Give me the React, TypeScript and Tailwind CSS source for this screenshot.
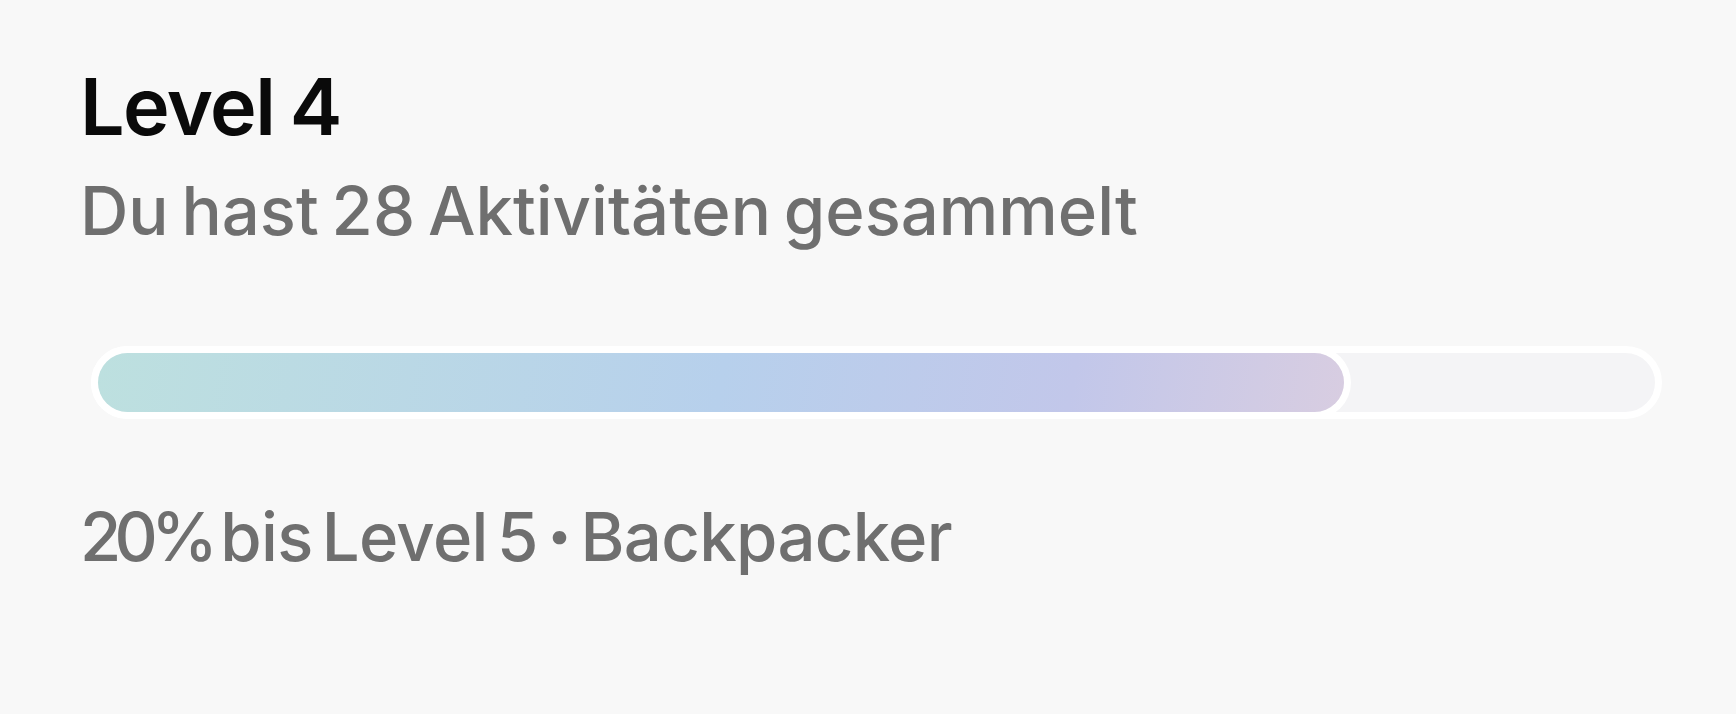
export default function App() {
  const progress = 80;

  return (
    <div className="min-h-[714px] w-full bg-[#f8f8f8] pl-[80px] pr-[74px] pt-[67px] font-['Inter','Noto_Sans',sans-serif]">
      <h1 className="text-[79px] leading-none font-semibold tracking-[-0.02em] [word-spacing:-3px] text-[#0a0a0a]">
        Level 4
      </h1>
      <p className="mt-[31px] text-[67px] leading-none font-medium [word-spacing:-5px] text-[#6f6f6f]">
        Du hast 28 Aktivitäten gesammelt
      </p>

      <div className="mt-[102px] ml-[11px] h-[73px] rounded-full border-[7px] border-white bg-[#f4f4f6]">
        <div
          className="h-full rounded-full bg-[linear-gradient(100deg,#bde0df,#b7d0ec_50%,#c2c7ea_78%,#d8cde1)] shadow-[0_0_0_7px_#ffffff]"
          style={{ width: `${progress}%` }}
        />
      </div>

      <p className="mt-[84px] text-[67px] leading-none font-medium tracking-[-0.01em] [word-spacing:-8px] text-[#6f6f6f]">
        <span className="tracking-[-0.1em]">20%</span> bis Level 5{" "}
        <span className="font-black">·</span> Backpacker
      </p>
    </div>
  );
}
